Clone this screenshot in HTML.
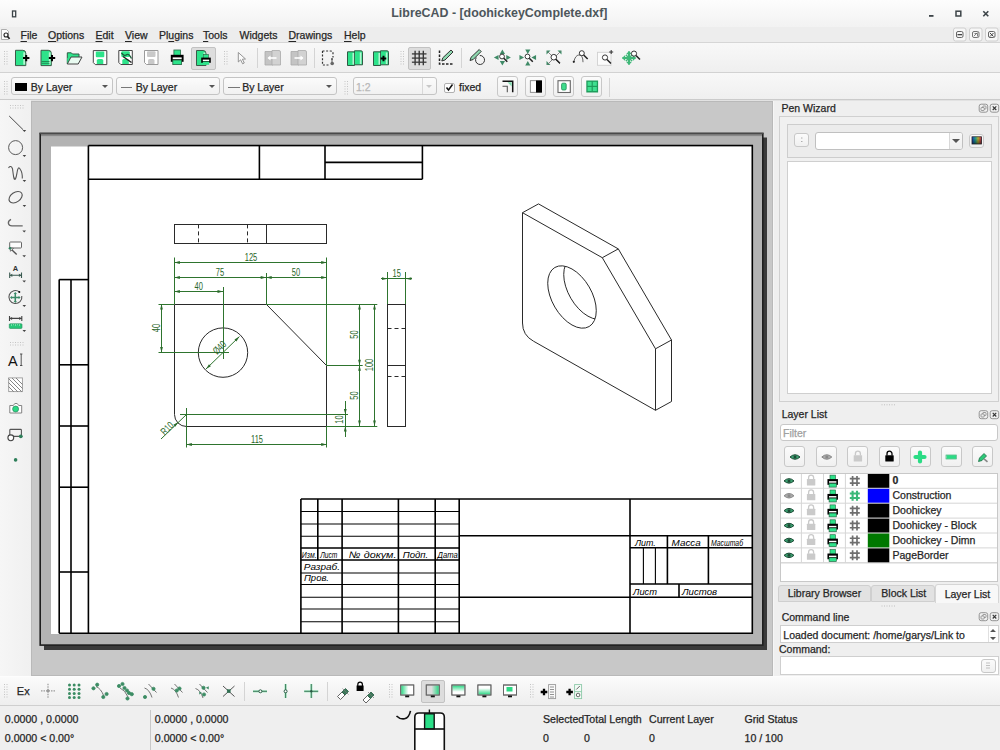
<!DOCTYPE html>
<html><head><meta charset="utf-8">
<style>
*{box-sizing:border-box;margin:0;padding:0}
html,body{width:1000px;height:750px;overflow:hidden;background:#efefef;font-family:"Liberation Sans",sans-serif;font-size:10.5px;color:#262626;-webkit-text-stroke-width:0.25px}
.a{position:absolute}
.t{position:absolute;white-space:pre;line-height:1}
.menu{top:30px}
.u{text-decoration:underline;text-underline-offset:1.5px;text-decoration-thickness:1px}
.st{font-size:10.6px}
#titlebar{left:0;top:0;width:1000px;height:27px;background:linear-gradient(#fdfdfd,#f2f2f2)}
#menubar{left:0;top:27px;width:1000px;height:16px;background:#ededed;border-bottom:1px solid #d6d6d6}
#tb1{left:0;top:43px;width:1000px;height:30px;background:linear-gradient(#f8f8f8,#efefef);border-bottom:1px solid #d2d2d2}
#tb2{left:0;top:73px;width:1000px;height:28px;background:linear-gradient(#f8f8f8,#efefef);border-bottom:1px solid #e2e2e2;box-shadow:inset 0 -1px 0 #cbcbcb}
#lefttb{left:0;top:100px;width:31px;height:577px;background:linear-gradient(90deg,#f6f6f6,#f0f0f0)}
#canvas{left:31px;top:101px;width:742px;height:575px;background:#c8c8c8;border:1px solid #b9b9b9}
#dock{left:773px;top:101px;width:227px;height:575px;background:#efefef;border-left:1px solid #f6f6f6}
#bottomtb{left:0;top:676px;width:1000px;height:30px;background:linear-gradient(#fbfbfb,#eeeeee);border-top:1px solid #fdfdfd;border-bottom:1px solid #cfcfcf}
#status{left:0;top:706px;width:1000px;height:44px;background:#efefef}
.combo{position:absolute;height:18px;border:1px solid #c4c4c4;border-radius:3px;background:linear-gradient(#fbfbfb,#f1f1f1)}
.arr{position:absolute;top:7px;width:0;height:0;border-left:3.3px solid transparent;border-right:3.3px solid transparent;border-top:3.6px solid #555}
.btn{position:absolute;border:1px solid #c8c8c8;border-radius:3px;background:linear-gradient(#fbfbfb,#f0f0f0)}
.chk{position:absolute;border:1px solid #c2c2c2;border-radius:2px;background:#dddddd}
.sep{position:absolute;width:1px;background:#d4d4d4}
</style></head><body>
<div id="titlebar" class="a"></div>
<div id="menubar" class="a"></div>
<div id="tb1" class="a"></div>
<div id="tb2" class="a"></div>
<div id="lefttb" class="a"></div>
<div id="canvas" class="a"></div>
<div id="dock" class="a"></div>
<div id="bottomtb" class="a"></div>
<div id="status" class="a"></div>

<svg class="a" style="left:0;top:0" width="1000" height="750" viewBox="0 0 1000 750"><style>
.k2{stroke:#000;stroke-width:1.6;fill:none}
.k1{stroke:#000;stroke-width:1.1;fill:none}
.d{stroke:#2a2a2a;stroke-width:1;fill:none}
.dd{stroke:#2a2a2a;stroke-width:1;fill:none;stroke-dasharray:4 3}
.g{stroke:#2e742e;stroke-width:1;fill:none}
.ga{fill:#2a6a2a}
.gt{fill:#2a662a;font-family:"Liberation Sans",sans-serif;text-anchor:middle}
.kt{fill:#000;font-family:"Liberation Sans",sans-serif;font-style:italic}
</style><rect x="44" y="137.5" width="723" height="512.5" fill="#3a3a3a"/>
<rect x="40.2" y="133.5" width="722.6" height="511.6" fill="#b3b3b3" stroke="#1e1e1e" stroke-width="1.6"/>
<rect x="41" y="134.3" width="721" height="1.8" fill="#8a8a8a"/>
<path d="M39.4 133.5 H763.6" stroke="#4a4a4a" stroke-width="1.6"/>
<rect x="51" y="146.5" width="702" height="487.5" fill="#fff"/>
<path class="k2" d="M88.4 145.5 H752.3 V633.3 H59.2"/>
<line x1="88.4" y1="145.5" x2="88.4" y2="633.3" class="k2"/>
<line x1="59.2" y1="279.6" x2="59.2" y2="633.3" class="k2"/>
<line x1="71.0" y1="279.6" x2="71.0" y2="633.3" class="k2"/>
<line x1="59.2" y1="279.6" x2="88.4" y2="279.6" class="k2"/>
<line x1="59.2" y1="364.8" x2="88.4" y2="364.8" class="k2"/>
<line x1="59.2" y1="426.0" x2="88.4" y2="426.0" class="k2"/>
<line x1="59.2" y1="487.2" x2="88.4" y2="487.2" class="k2"/>
<line x1="59.2" y1="572.0" x2="88.4" y2="572.0" class="k2"/>
<line x1="88.4" y1="179.2" x2="422.4" y2="179.2" class="k2"/>
<line x1="422.4" y1="145.5" x2="422.4" y2="179.2" class="k2"/>
<line x1="259.4" y1="145.5" x2="259.4" y2="179.2" class="k2"/>
<line x1="325.0" y1="145.5" x2="325.0" y2="179.2" class="k2"/>
<line x1="325.0" y1="162.4" x2="422.4" y2="162.4" class="k2"/>
<line x1="300.9" y1="499.0" x2="752.3" y2="499.0" class="k2"/>
<line x1="300.9" y1="499.0" x2="300.9" y2="633.3" class="k2"/>
<line x1="317.8" y1="499.0" x2="317.8" y2="560.0" class="k2"/>
<line x1="342.1" y1="499.0" x2="342.1" y2="633.3" class="k2"/>
<line x1="398.4" y1="499.0" x2="398.4" y2="633.3" class="k2"/>
<line x1="435.2" y1="499.0" x2="435.2" y2="633.3" class="k2"/>
<line x1="459.2" y1="499.0" x2="459.2" y2="633.3" class="k2"/>
<line x1="630.0" y1="499.0" x2="630.0" y2="633.3" class="k2"/>
<line x1="300.9" y1="511.5" x2="459.2" y2="511.5" class="k1"/>
<line x1="300.9" y1="524.0" x2="459.2" y2="524.0" class="k1"/>
<line x1="300.9" y1="536.2" x2="459.2" y2="536.2" class="k1"/>
<line x1="300.9" y1="573.0" x2="459.2" y2="573.0" class="k1"/>
<line x1="300.9" y1="584.5" x2="459.2" y2="584.5" class="k1"/>
<line x1="300.9" y1="597.3" x2="459.2" y2="597.3" class="k1"/>
<line x1="300.9" y1="609.0" x2="459.2" y2="609.0" class="k1"/>
<line x1="300.9" y1="621.7" x2="459.2" y2="621.7" class="k1"/>
<line x1="300.9" y1="548.0" x2="459.2" y2="548.0" class="k2"/>
<line x1="300.9" y1="560.0" x2="459.2" y2="560.0" class="k2"/>
<line x1="459.2" y1="535.8" x2="752.3" y2="535.8" class="k2"/>
<line x1="459.2" y1="597.2" x2="752.3" y2="597.2" class="k2"/>
<line x1="630.0" y1="547.7" x2="752.3" y2="547.7" class="k2"/>
<line x1="630.0" y1="584.0" x2="752.3" y2="584.0" class="k2"/>
<line x1="667.4" y1="535.8" x2="667.4" y2="584.0" class="k2"/>
<line x1="708.4" y1="535.8" x2="708.4" y2="584.0" class="k2"/>
<line x1="643.4" y1="547.7" x2="643.4" y2="584.0" class="k1"/>
<line x1="655.4" y1="547.7" x2="655.4" y2="584.0" class="k1"/>
<line x1="679.0" y1="584.0" x2="679.0" y2="597.2" class="k2"/>
<path class="d" d="M174.5 304.5 H266.5 L326.5 365.5 V426.5 H186.5 A12 12 0 0 1 174.5 414.5 Z"/>
<circle class="d" cx="223" cy="352.6" r="24.7"/>
<rect class="d" x="174.5" y="224.5" width="152" height="19"/>
<line x1="266.5" y1="224.4" x2="266.5" y2="243.3" class="d"/>
<line x1="198.5" y1="224.4" x2="198.5" y2="243.3" class="dd"/>
<line x1="247.5" y1="224.4" x2="247.5" y2="243.3" class="dd"/>
<rect class="d" x="387.5" y="304.5" width="18" height="122"/>
<line x1="387.5" y1="365.5" x2="405.9" y2="365.5" class="d"/>
<line x1="387.5" y1="328.5" x2="405.9" y2="328.5" class="dd"/>
<line x1="387.5" y1="376.5" x2="405.9" y2="376.5" class="dd"/>
<line x1="174.5" y1="257.5" x2="174.5" y2="304.0" class="g"/>
<line x1="326.5" y1="257.5" x2="326.5" y2="365.3" class="g"/>
<line x1="266.5" y1="273.0" x2="266.5" y2="304.0" class="g"/>
<line x1="223.5" y1="287.0" x2="223.5" y2="359.0" class="g"/>
<line x1="174.4" y1="262.5" x2="326.7" y2="262.5" class="g"/>
<path class="ga" d="M174.4 262.5 L179.9 261.1 L179.9 263.9Z"/>
<path class="ga" d="M326.7 262.5 L321.2 263.9 L321.2 261.1Z"/>
<text transform="translate(251.0 260.5) rotate(0) scale(0.72 1)" class="gt" font-size="10.4">125</text>
<line x1="174.4" y1="277.5" x2="266.2" y2="277.5" class="g"/>
<path class="ga" d="M174.4 277.5 L179.9 276.1 L179.9 278.9Z"/>
<path class="ga" d="M266.2 277.5 L260.7 278.9 L260.7 276.1Z"/>
<text transform="translate(220.0 275.5) rotate(0) scale(0.72 1)" class="gt" font-size="10.4">75</text>
<line x1="266.2" y1="277.5" x2="326.7" y2="277.5" class="g"/>
<path class="ga" d="M266.2 277.5 L271.7 276.1 L271.7 278.9Z"/>
<path class="ga" d="M326.7 277.5 L321.2 278.9 L321.2 276.1Z"/>
<text transform="translate(296.0 275.5) rotate(0) scale(0.72 1)" class="gt" font-size="10.4">50</text>
<line x1="174.4" y1="291.5" x2="223.0" y2="291.5" class="g"/>
<path class="ga" d="M174.4 291.5 L179.9 290.1 L179.9 292.9Z"/>
<path class="ga" d="M223.0 291.5 L217.5 292.9 L217.5 290.1Z"/>
<text transform="translate(198.7 289.5) rotate(0) scale(0.72 1)" class="gt" font-size="10.4">40</text>
<line x1="158.5" y1="304.5" x2="174.4" y2="304.5" class="g"/>
<line x1="158.5" y1="352.5" x2="229.0" y2="352.5" class="g"/>
<line x1="161.5" y1="304.0" x2="161.5" y2="352.6" class="g"/>
<path class="ga" d="M161.5 304.0 L162.9 309.5 L160.1 309.5Z"/>
<path class="ga" d="M161.5 352.6 L160.1 347.1 L162.9 347.1Z"/>
<text transform="translate(159.5 328.0) rotate(-90) scale(0.72 1)" class="gt" font-size="10.4">40</text>
<line x1="206.0" y1="369.0" x2="239.4" y2="336.6" class="g"/>
<path class="ga" d="M206.0 369.0 L209.0 364.2 L210.9 366.2Z"/>
<path class="ga" d="M239.4 336.6 L236.4 341.4 L234.5 339.4Z"/>
<text transform="translate(222.0 350.0) rotate(-45) scale(0.72 1)" class="gt" font-size="10.4">Ø40</text>
<line x1="266.0" y1="304.5" x2="377.3" y2="304.5" class="g"/>
<line x1="326.7" y1="365.5" x2="362.7" y2="365.5" class="g"/>
<line x1="326.7" y1="426.5" x2="377.3" y2="426.5" class="g"/>
<line x1="359.5" y1="304.0" x2="359.5" y2="365.3" class="g"/>
<path class="ga" d="M359.5 304.0 L360.9 309.5 L358.1 309.5Z"/>
<path class="ga" d="M359.5 365.3 L358.1 359.8 L360.9 359.8Z"/>
<text transform="translate(357.5 334.5) rotate(-90) scale(0.72 1)" class="gt" font-size="10.4">50</text>
<line x1="359.5" y1="365.3" x2="359.5" y2="426.0" class="g"/>
<path class="ga" d="M359.5 365.3 L360.9 370.8 L358.1 370.8Z"/>
<path class="ga" d="M359.5 426.0 L358.1 420.5 L360.9 420.5Z"/>
<text transform="translate(357.5 395.5) rotate(-90) scale(0.72 1)" class="gt" font-size="10.4">50</text>
<line x1="374.5" y1="304.0" x2="374.5" y2="426.0" class="g"/>
<path class="ga" d="M374.5 304.0 L375.9 309.5 L373.1 309.5Z"/>
<path class="ga" d="M374.5 426.0 L373.1 420.5 L375.9 420.5Z"/>
<text transform="translate(372.7 365.0) rotate(-90) scale(0.72 1)" class="gt" font-size="10.4">100</text>
<line x1="180.0" y1="414.5" x2="348.0" y2="414.5" class="g"/>
<line x1="345.5" y1="401.0" x2="345.5" y2="437.0" class="g"/>
<path class="ga" d="M345.3 414.6 L343.9 409.1 L346.7 409.1Z"/>
<path class="ga" d="M345.3 426.0 L346.7 431.5 L343.9 431.5Z"/>
<text transform="translate(343.3 419.5) rotate(-90) scale(0.72 1)" class="gt" font-size="10.4">10</text>
<line x1="186.5" y1="408.0" x2="186.5" y2="447.5" class="g"/>
<line x1="326.5" y1="426.0" x2="326.5" y2="447.5" class="g"/>
<line x1="186.4" y1="444.5" x2="326.7" y2="444.5" class="g"/>
<path class="ga" d="M186.4 444.5 L191.9 443.1 L191.9 445.9Z"/>
<path class="ga" d="M326.7 444.5 L321.2 445.9 L321.2 443.1Z"/>
<text transform="translate(257.0 442.5) rotate(0) scale(0.72 1)" class="gt" font-size="10.4">115</text>
<line x1="161.0" y1="439.0" x2="186.4" y2="414.6" class="g"/>
<path class="ga" d="M178.3 422.0 L175.3 426.8 L173.4 424.8Z"/>
<text transform="translate(169.5 431.0) rotate(-45) scale(0.72 1)" class="gt" font-size="10.4">R10</text>
<line x1="387.5" y1="272.0" x2="387.5" y2="304.0" class="g"/>
<line x1="405.5" y1="272.0" x2="405.5" y2="304.0" class="g"/>
<line x1="381.0" y1="278.5" x2="412.0" y2="278.5" class="g"/>
<path class="ga" d="M387.5 278.7 L382.0 280.1 L382.0 277.3Z"/>
<path class="ga" d="M405.9 278.7 L411.4 277.3 L411.4 280.1Z"/>
<text transform="translate(396.7 276.5) rotate(0) scale(0.72 1)" class="gt" font-size="10.4">15</text>
<path class="d" d="M522.5 212.7 L602.3 257.7 L655.5 348.8 L655.5 410.3 L533.5 341.2 Q522.5 335.2 522.5 323 Z"/>
<line x1="522.5" y1="212.7" x2="538.5" y2="203.9" class="d"/>
<line x1="602.3" y1="257.7" x2="618.3" y2="248.9" class="d"/>
<line x1="655.5" y1="348.8" x2="671.5" y2="340.0" class="d"/>
<line x1="655.5" y1="410.3" x2="671.5" y2="401.5" class="d"/>
<path class="d" d="M538.5 203.9 L618.3 248.9 L671.5 340.0 L671.5 401.5"/>
<clipPath id="hc"><ellipse cx="0" cy="0" rx="28" ry="28" transform="matrix(0.867 0.491 0 1 572 297)"/></clipPath>
<g transform="matrix(0.867 0.491 0 1 572 297)"><circle class="d" cx="0" cy="0" r="28" vector-effect="non-scaling-stroke"/></g>
<g clip-path="url(#hc)"><g transform="matrix(0.867 0.491 0 1 588.0 288.2)"><circle class="d" cx="0" cy="0" r="28" vector-effect="non-scaling-stroke"/></g></g>
<text x="301.8" y="558.4" class="kt" font-size="9.6" textLength="14.8" lengthAdjust="spacingAndGlyphs">Изм.</text>
<text x="320.2" y="558.4" class="kt" font-size="9.6" textLength="17.2" lengthAdjust="spacingAndGlyphs">Лист</text>
<text x="349" y="558.4" class="kt" font-size="9.6" textLength="47.5" lengthAdjust="spacingAndGlyphs">№  докум.</text>
<text x="402.8" y="558.4" class="kt" font-size="9.6" textLength="25.5" lengthAdjust="spacingAndGlyphs">Подп.</text>
<text x="437.6" y="558.4" class="kt" font-size="9.6" textLength="20.2" lengthAdjust="spacingAndGlyphs">Дата</text>
<text x="303.8" y="570.2" class="kt" font-size="9.6" textLength="36.2" lengthAdjust="spacingAndGlyphs">Разраб.</text>
<text x="304" y="581.4" class="kt" font-size="9.6" textLength="25" lengthAdjust="spacingAndGlyphs">Пров.</text>
<text x="635" y="546.4" class="kt" font-size="9.6" textLength="20.8" lengthAdjust="spacingAndGlyphs">Лит.</text>
<text x="671.6" y="546.4" class="kt" font-size="9.6" textLength="29.2" lengthAdjust="spacingAndGlyphs">Масса</text>
<text x="711" y="546.4" class="kt" font-size="9.6" textLength="32" lengthAdjust="spacingAndGlyphs">Масштаб</text>
<text x="633" y="595" class="kt" font-size="9.6" textLength="24" lengthAdjust="spacingAndGlyphs">Лист</text>
<text x="682" y="595" class="kt" font-size="9.6" textLength="35" lengthAdjust="spacingAndGlyphs">Листов</text>
</svg><!-- TITLE -->
<div class="t" style="left:391.3px;top:7.2px;font-size:12.4px;font-weight:bold;color:#4d565b;-webkit-text-stroke-width:0">LibreCAD - [doohickeyComplete.dxf]</div>

<!-- MENU -->
<div class="t menu" style="left:20.5px"><span class="u">F</span>ile</div>
<div class="t menu" style="left:48px"><span class="u">O</span>ptions</div>
<div class="t menu" style="left:95.5px"><span class="u">E</span>dit</div>
<div class="t menu" style="left:125px"><span class="u">V</span>iew</div>
<div class="t menu" style="left:159px">Pl<span class="u">u</span>gins</div>
<div class="t menu" style="left:203px"><span class="u">T</span>ools</div>
<div class="t menu" style="left:239.5px">Widgets</div>
<div class="t menu" style="left:288.5px"><span class="u">D</span>rawings</div>
<div class="t menu" style="left:344px"><span class="u">H</span>elp</div>
<div class="a" style="left:953px;top:27.5px;width:13.5px;height:14px" ></div>

<!-- TOOLBAR 1 checked buttons -->
<div class="chk" style="left:191px;top:46.5px;width:25px;height:23px"></div>
<div class="chk" style="left:407.7px;top:46.5px;width:23.6px;height:23px"></div>
<div class="sep" style="left:257px;top:48px;height:20px"></div>
<div class="sep" style="left:314px;top:48px;height:20px"></div>
<div class="sep" style="left:461px;top:48px;height:20px"></div>

<!-- TOOLBAR 2 -->
<div class="combo" style="left:10.8px;top:77.3px;width:102.5px"><div class="a" style="left:3.5px;top:4.5px;width:12px;height:8.5px;background:#000"></div><div class="t" style="left:19px;top:3.5px">By Layer</div><div class="arr" style="left:90.6px"></div></div>
<div class="combo" style="left:115.7px;top:77.3px;width:104.6px"><div class="a" style="left:4px;top:8.5px;width:11.5px;height:1px;background:#777"></div><div class="t" style="left:19px;top:3.5px">By Layer</div><div class="arr" style="left:92.6px"></div></div>
<div class="combo" style="left:222.7px;top:77.3px;width:114.4px"><div class="a" style="left:4px;top:8.5px;width:12px;height:1px;background:#777"></div><div class="t" style="left:18.5px;top:3.5px">By Layer</div><div class="arr" style="left:102.4px"></div></div>
<div class="combo dis" style="left:352.5px;top:77.3px;width:84.7px"><div class="t" style="left:2.5px;top:3.5px;color:#b8b8b8">1:2</div><div class="a" style="left:68px;top:0;width:1px;height:16px;background:#d8d8d8"></div><div class="arr" style="left:72.8px;border-top-color:#c8c8c8"></div></div>
<div class="a" style="left:444.4px;top:82.5px;width:10.5px;height:10px;border:1px solid #b0b0b0;border-radius:2px;background:#fdfdfd"></div>
<div class="t" style="left:459px;top:82px">fixed</div>
<div class="btn" style="left:497.4px;top:76.4px;width:20.6px;height:21px"></div>
<div class="btn" style="left:525.4px;top:76.4px;width:20.6px;height:21px"></div>
<div class="btn" style="left:553.4px;top:76.4px;width:20.6px;height:21px"></div>
<div class="btn" style="left:581.4px;top:76.4px;width:20.6px;height:21px"></div>
<div class="sep" style="left:609px;top:78px;height:19px"></div>

<!-- DOCK -->
<div class="t" style="left:781.5px;top:102.6px">Pen Wizard</div>
<div class="a" style="left:778.5px;top:116px;width:220.5px;height:285.5px;border:1px solid #d0d0d0;background:#f0f0f0"></div>
<div class="a" style="left:786.5px;top:123.5px;width:205.5px;height:34px;border:1px solid #cdcdcd;background:#ececec"></div>
<div class="btn" style="left:794px;top:133px;width:14.5px;height:14px"></div>
<div class="a" style="left:814.5px;top:131.5px;width:148.5px;height:18px;border:1px solid #c0c0c0;border-radius:3px;background:#fff"></div>
<div class="a" style="left:948.5px;top:132.5px;width:13.5px;height:16px;background:linear-gradient(#f8f8f8,#efefef);border-left:1px solid #d8d8d8;border-radius:0 2px 2px 0"></div>
<div class="arr" style="left:952px;top:139px;border-left-width:4px;border-right-width:4px;border-top-width:4px"></div>
<div class="btn" style="left:969px;top:133.5px;width:14.5px;height:14px"></div>
<div class="a" style="left:786.7px;top:160.5px;width:205.3px;height:233.5px;border:1px solid #cfcfcf;background:#fff"></div>

<div class="t" style="left:781.7px;top:409px">Layer List</div>
<div class="a" style="left:780.4px;top:423.7px;width:217.6px;height:17.6px;border:1px solid #c8c8c8;border-radius:3px;background:#fff"></div>
<div class="t" style="left:783px;top:427.5px;color:#a0a0a0">Filter</div>
<div class="btn" style="left:784.4px;top:446.4px;width:21px;height:21px"></div>
<div class="btn" style="left:816px;top:446.4px;width:21px;height:21px"></div>
<div class="btn" style="left:847.3px;top:446.4px;width:21px;height:21px"></div>
<div class="btn" style="left:878.5px;top:446.4px;width:21px;height:21px"></div>
<div class="btn" style="left:909.6px;top:446.4px;width:21px;height:21px"></div>
<div class="btn" style="left:940.7px;top:446.4px;width:21px;height:21px"></div>
<div class="btn" style="left:972.4px;top:446.4px;width:21px;height:21px"></div>
<div class="a" id="ltable" style="left:780.3px;top:473.3px;width:217.3px;height:108.3px;border:1px solid #c8c8c8;background:#fff"></div>


<!-- LAYER NAMES -->
<div class="t" style="left:892.5px;top:475.4px;font-weight:bold;">0</div>
<div class="t" style="left:892.5px;top:490.2px;">Construction</div>
<div class="t" style="left:892.5px;top:505.1px;">Doohickey</div>
<div class="t" style="left:892.5px;top:520.0px;">Doohickey - Block</div>
<div class="t" style="left:892.5px;top:535.0px;">Doohickey - Dimn</div>
<div class="t" style="left:892.5px;top:549.8px;">PageBorder</div>
<div class="a" style="left:778.3px;top:584.7px;width:92.7px;height:17.3px;border:1px solid #cfcfcf;border-radius:3px 3px 0 0;background:#e2e2e2"></div>
<div class="a" style="left:871px;top:584.7px;width:64.3px;height:17.3px;border:1px solid #cfcfcf;border-radius:3px 3px 0 0;background:#e2e2e2"></div>
<div class="a" style="left:935.3px;top:584px;width:63.4px;height:19px;border:1px solid #d6d6d6;border-bottom:none;border-radius:3px 3px 0 0;background:#f8f8f8"></div>
<div class="t" style="left:787.7px;top:588px">Library Browser</div>
<div class="t" style="left:881.3px;top:588px">Block List</div>
<div class="t" style="left:944.7px;top:589px">Layer List</div>

<div class="t" style="left:781.7px;top:611.5px">Command line</div>
<div class="a" style="left:779.7px;top:625.3px;width:219px;height:17.4px;border:1px solid #cfcfcf;background:#fff"></div>
<div class="a" style="left:987.7px;top:626.3px;width:1px;height:15.4px;background:#e0e0e0"></div>
<div class="t" style="left:783.3px;top:629.5px">Loaded document: /home/garys/Link to</div>
<div class="t" style="left:779px;top:644px">Command:</div>
<div class="a" style="left:779.7px;top:656.4px;width:219px;height:18.9px;border:1px solid #cfcfcf;background:#fff"></div>
<div class="btn" style="left:981.3px;top:658.7px;width:14.7px;height:14px"></div>

<!-- BOTTOM TOOLBAR -->
<div class="t" style="left:16.8px;top:686px;font-size:11px">Ex</div>
<div class="sep" style="left:244px;top:682px;height:19px"></div>
<div class="sep" style="left:327px;top:682px;height:19px"></div>
<div class="chk" style="left:420.5px;top:680px;width:24.3px;height:23.2px"></div>

<!-- STATUS -->
<div class="t st" style="left:4.8px;top:714px">0.0000 , 0.0000</div>
<div class="t st" style="left:4.8px;top:733px">0.0000 &lt; 0.00°</div>
<div class="a" style="left:149.5px;top:709.6px;width:1px;height:40.4px;background:#c8c8c8"></div>
<div class="t st" style="left:154.8px;top:714px">0.0000 , 0.0000</div>
<div class="t st" style="left:154.8px;top:733px">0.0000 &lt; 0.00°</div>
<div class="t st" style="left:543px;top:714px">Selected</div>
<div class="t st" style="left:584px;top:714px">Total Length</div>
<div class="t st" style="left:649px;top:714px">Current Layer</div>
<div class="t st" style="left:744.5px;top:714px">Grid Status</div>
<div class="t st" style="left:543px;top:733px">0</div>
<div class="t st" style="left:584px;top:733px">0</div>
<div class="t st" style="left:649px;top:733px">0</div>
<div class="t st" style="left:744.5px;top:733px">10 / 100</div>
<svg class="a" style="left:0;top:0" width="1000" height="750" viewBox="0 0 1000 750"><rect x="12.5" y="11" width="3.2" height="5.8" fill="none" stroke="#3c4448" stroke-width="1.3"/>
<rect x="929" y="15" width="4.5" height="1.8" fill="#3c4448"/>
<rect x="956" y="11.2" width="4.8" height="4.8" fill="none" stroke="#3c4448" stroke-width="1.5"/>
<path d="M983.3 11.3 L988.3 16.3 M988.3 11.3 L983.3 16.3" stroke="#3c4448" stroke-width="1.6"/>
<rect x="953.5" y="28" width="12.5" height="13" rx="2" fill="#f7f7f7" stroke="#cfcfcf"/>
<rect x="969.5" y="28" width="12.5" height="13" rx="2" fill="#f7f7f7" stroke="#cfcfcf"/>
<rect x="985.5" y="28" width="12.5" height="13" rx="2" fill="#f7f7f7" stroke="#cfcfcf"/>
<rect x="956.5" y="31.5" width="6.5" height="6" rx="1.5" fill="none" stroke="#555" stroke-width="0.9"/><rect x="957.5" y="34" width="4.5" height="1.3" fill="#444"/>
<rect x="972.5" y="31.5" width="6.5" height="6" rx="1.5" fill="none" stroke="#666" stroke-width="0.9"/><path d="M974 36 l3.5 -3.5 M974.5 33.5 h3 v3" stroke="#666" stroke-width="0.8" fill="none"/>
<rect x="988.5" y="31.5" width="6.5" height="6" rx="1.5" fill="none" stroke="#555" stroke-width="0.9"/><path d="M990 33 l3.5 3.5 M993.5 33 l-3.5 3.5" stroke="#444" stroke-width="1"/>
<path d="M1.5 29.5 h5 l2 2 v8 h-7z" fill="#fdfdfd" stroke="#9a9a9a" stroke-width="0.8"/><circle cx="6" cy="35" r="2" fill="none" stroke="#222" stroke-width="1.1"/><path d="M7.3 36.4 l2.4 2.4" stroke="#222" stroke-width="1.5"/>
<rect x="4" y="51" width="1" height="1" fill="#c4c4c4"/><rect x="6.5" y="51" width="1" height="1" fill="#c4c4c4"/>
<rect x="4" y="53.5" width="1" height="1" fill="#c4c4c4"/><rect x="6.5" y="53.5" width="1" height="1" fill="#c4c4c4"/>
<rect x="4" y="56.0" width="1" height="1" fill="#c4c4c4"/><rect x="6.5" y="56.0" width="1" height="1" fill="#c4c4c4"/>
<rect x="4" y="58.5" width="1" height="1" fill="#c4c4c4"/><rect x="6.5" y="58.5" width="1" height="1" fill="#c4c4c4"/>
<rect x="4" y="61.0" width="1" height="1" fill="#c4c4c4"/><rect x="6.5" y="61.0" width="1" height="1" fill="#c4c4c4"/>
<rect x="4" y="63.5" width="1" height="1" fill="#c4c4c4"/><rect x="6.5" y="63.5" width="1" height="1" fill="#c4c4c4"/>
<rect x="224" y="51" width="1" height="1" fill="#c4c4c4"/><rect x="226.5" y="51" width="1" height="1" fill="#c4c4c4"/>
<rect x="224" y="53.5" width="1" height="1" fill="#c4c4c4"/><rect x="226.5" y="53.5" width="1" height="1" fill="#c4c4c4"/>
<rect x="224" y="56.0" width="1" height="1" fill="#c4c4c4"/><rect x="226.5" y="56.0" width="1" height="1" fill="#c4c4c4"/>
<rect x="224" y="58.5" width="1" height="1" fill="#c4c4c4"/><rect x="226.5" y="58.5" width="1" height="1" fill="#c4c4c4"/>
<rect x="224" y="61.0" width="1" height="1" fill="#c4c4c4"/><rect x="226.5" y="61.0" width="1" height="1" fill="#c4c4c4"/>
<rect x="224" y="63.5" width="1" height="1" fill="#c4c4c4"/><rect x="226.5" y="63.5" width="1" height="1" fill="#c4c4c4"/>
<rect x="400.5" y="51" width="1" height="1" fill="#c4c4c4"/><rect x="403.0" y="51" width="1" height="1" fill="#c4c4c4"/>
<rect x="400.5" y="53.5" width="1" height="1" fill="#c4c4c4"/><rect x="403.0" y="53.5" width="1" height="1" fill="#c4c4c4"/>
<rect x="400.5" y="56.0" width="1" height="1" fill="#c4c4c4"/><rect x="403.0" y="56.0" width="1" height="1" fill="#c4c4c4"/>
<rect x="400.5" y="58.5" width="1" height="1" fill="#c4c4c4"/><rect x="403.0" y="58.5" width="1" height="1" fill="#c4c4c4"/>
<rect x="400.5" y="61.0" width="1" height="1" fill="#c4c4c4"/><rect x="403.0" y="61.0" width="1" height="1" fill="#c4c4c4"/>
<rect x="400.5" y="63.5" width="1" height="1" fill="#c4c4c4"/><rect x="403.0" y="63.5" width="1" height="1" fill="#c4c4c4"/>
<rect x="4" y="81" width="1" height="1" fill="#c4c4c4"/><rect x="6.5" y="81" width="1" height="1" fill="#c4c4c4"/>
<rect x="4" y="83.5" width="1" height="1" fill="#c4c4c4"/><rect x="6.5" y="83.5" width="1" height="1" fill="#c4c4c4"/>
<rect x="4" y="86.0" width="1" height="1" fill="#c4c4c4"/><rect x="6.5" y="86.0" width="1" height="1" fill="#c4c4c4"/>
<rect x="4" y="88.5" width="1" height="1" fill="#c4c4c4"/><rect x="6.5" y="88.5" width="1" height="1" fill="#c4c4c4"/>
<rect x="4" y="91.0" width="1" height="1" fill="#c4c4c4"/><rect x="6.5" y="91.0" width="1" height="1" fill="#c4c4c4"/>
<rect x="4" y="93.5" width="1" height="1" fill="#c4c4c4"/><rect x="6.5" y="93.5" width="1" height="1" fill="#c4c4c4"/>
<rect x="344.5" y="81" width="1" height="1" fill="#c4c4c4"/><rect x="347.0" y="81" width="1" height="1" fill="#c4c4c4"/>
<rect x="344.5" y="83.5" width="1" height="1" fill="#c4c4c4"/><rect x="347.0" y="83.5" width="1" height="1" fill="#c4c4c4"/>
<rect x="344.5" y="86.0" width="1" height="1" fill="#c4c4c4"/><rect x="347.0" y="86.0" width="1" height="1" fill="#c4c4c4"/>
<rect x="344.5" y="88.5" width="1" height="1" fill="#c4c4c4"/><rect x="347.0" y="88.5" width="1" height="1" fill="#c4c4c4"/>
<rect x="344.5" y="91.0" width="1" height="1" fill="#c4c4c4"/><rect x="347.0" y="91.0" width="1" height="1" fill="#c4c4c4"/>
<rect x="344.5" y="93.5" width="1" height="1" fill="#c4c4c4"/><rect x="347.0" y="93.5" width="1" height="1" fill="#c4c4c4"/>
<rect x="10" y="105" width="1" height="1" fill="#c4c4c4"/><rect x="10" y="107.5" width="1" height="1" fill="#c4c4c4"/>
<rect x="12.5" y="105" width="1" height="1" fill="#c4c4c4"/><rect x="12.5" y="107.5" width="1" height="1" fill="#c4c4c4"/>
<rect x="15.0" y="105" width="1" height="1" fill="#c4c4c4"/><rect x="15.0" y="107.5" width="1" height="1" fill="#c4c4c4"/>
<rect x="17.5" y="105" width="1" height="1" fill="#c4c4c4"/><rect x="17.5" y="107.5" width="1" height="1" fill="#c4c4c4"/>
<rect x="20.0" y="105" width="1" height="1" fill="#c4c4c4"/><rect x="20.0" y="107.5" width="1" height="1" fill="#c4c4c4"/>
<rect x="22.5" y="105" width="1" height="1" fill="#c4c4c4"/><rect x="22.5" y="107.5" width="1" height="1" fill="#c4c4c4"/>
<rect x="10" y="342" width="1" height="1" fill="#c4c4c4"/><rect x="10" y="344.5" width="1" height="1" fill="#c4c4c4"/>
<rect x="12.5" y="342" width="1" height="1" fill="#c4c4c4"/><rect x="12.5" y="344.5" width="1" height="1" fill="#c4c4c4"/>
<rect x="15.0" y="342" width="1" height="1" fill="#c4c4c4"/><rect x="15.0" y="344.5" width="1" height="1" fill="#c4c4c4"/>
<rect x="17.5" y="342" width="1" height="1" fill="#c4c4c4"/><rect x="17.5" y="344.5" width="1" height="1" fill="#c4c4c4"/>
<rect x="20.0" y="342" width="1" height="1" fill="#c4c4c4"/><rect x="20.0" y="344.5" width="1" height="1" fill="#c4c4c4"/>
<rect x="22.5" y="342" width="1" height="1" fill="#c4c4c4"/><rect x="22.5" y="344.5" width="1" height="1" fill="#c4c4c4"/>
<rect x="4" y="684" width="1" height="1" fill="#c4c4c4"/><rect x="6.5" y="684" width="1" height="1" fill="#c4c4c4"/>
<rect x="4" y="686.5" width="1" height="1" fill="#c4c4c4"/><rect x="6.5" y="686.5" width="1" height="1" fill="#c4c4c4"/>
<rect x="4" y="689.0" width="1" height="1" fill="#c4c4c4"/><rect x="6.5" y="689.0" width="1" height="1" fill="#c4c4c4"/>
<rect x="4" y="691.5" width="1" height="1" fill="#c4c4c4"/><rect x="6.5" y="691.5" width="1" height="1" fill="#c4c4c4"/>
<rect x="4" y="694.0" width="1" height="1" fill="#c4c4c4"/><rect x="6.5" y="694.0" width="1" height="1" fill="#c4c4c4"/>
<rect x="4" y="696.5" width="1" height="1" fill="#c4c4c4"/><rect x="6.5" y="696.5" width="1" height="1" fill="#c4c4c4"/>
<rect x="389" y="684" width="1" height="1" fill="#c4c4c4"/><rect x="391.5" y="684" width="1" height="1" fill="#c4c4c4"/>
<rect x="389" y="686.5" width="1" height="1" fill="#c4c4c4"/><rect x="391.5" y="686.5" width="1" height="1" fill="#c4c4c4"/>
<rect x="389" y="689.0" width="1" height="1" fill="#c4c4c4"/><rect x="391.5" y="689.0" width="1" height="1" fill="#c4c4c4"/>
<rect x="389" y="691.5" width="1" height="1" fill="#c4c4c4"/><rect x="391.5" y="691.5" width="1" height="1" fill="#c4c4c4"/>
<rect x="389" y="694.0" width="1" height="1" fill="#c4c4c4"/><rect x="391.5" y="694.0" width="1" height="1" fill="#c4c4c4"/>
<rect x="389" y="696.5" width="1" height="1" fill="#c4c4c4"/><rect x="391.5" y="696.5" width="1" height="1" fill="#c4c4c4"/>
<rect x="530" y="684" width="1" height="1" fill="#c4c4c4"/><rect x="532.5" y="684" width="1" height="1" fill="#c4c4c4"/>
<rect x="530" y="686.5" width="1" height="1" fill="#c4c4c4"/><rect x="532.5" y="686.5" width="1" height="1" fill="#c4c4c4"/>
<rect x="530" y="689.0" width="1" height="1" fill="#c4c4c4"/><rect x="532.5" y="689.0" width="1" height="1" fill="#c4c4c4"/>
<rect x="530" y="691.5" width="1" height="1" fill="#c4c4c4"/><rect x="532.5" y="691.5" width="1" height="1" fill="#c4c4c4"/>
<rect x="530" y="694.0" width="1" height="1" fill="#c4c4c4"/><rect x="532.5" y="694.0" width="1" height="1" fill="#c4c4c4"/>
<rect x="530" y="696.5" width="1" height="1" fill="#c4c4c4"/><rect x="532.5" y="696.5" width="1" height="1" fill="#c4c4c4"/>
<rect x="881.5" y="605.5" width="1" height="1" fill="#c0c0c0"/>
<rect x="884.0" y="605.5" width="1" height="1" fill="#c0c0c0"/>
<rect x="886.5" y="605.5" width="1" height="1" fill="#c0c0c0"/>
<rect x="889.0" y="605.5" width="1" height="1" fill="#c0c0c0"/>
<rect x="891.5" y="605.5" width="1" height="1" fill="#c0c0c0"/>
<rect x="894.0" y="605.5" width="1" height="1" fill="#c0c0c0"/>
<rect x="881.5" y="404.3" width="1" height="1" fill="#c0c0c0"/>
<rect x="884.0" y="404.3" width="1" height="1" fill="#c0c0c0"/>
<rect x="886.5" y="404.3" width="1" height="1" fill="#c0c0c0"/>
<rect x="889.0" y="404.3" width="1" height="1" fill="#c0c0c0"/>
<rect x="891.5" y="404.3" width="1" height="1" fill="#c0c0c0"/>
<rect x="894.0" y="404.3" width="1" height="1" fill="#c0c0c0"/>
<path d="M15.5 50.3 h7.300000000000001 q3 0 3 3 v12.3 h-10.3 z" fill="#2de38a" stroke="#3b5a48" stroke-width="1"/>
<rect x="23.3" y="52.3" width="1.8" height="12.3" fill="#b6f5d2"/>
<path d="M23.0 58.1 h6.4 M26.2 54.9 v6.4" stroke="#000" stroke-width="2"/>
<path d="M41 50.3 h7.300000000000001 q3 0 3 3 v12.3 h-10.3 z" fill="#2de38a" stroke="#3b5a48" stroke-width="1"/>
<rect x="48.8" y="52.3" width="1.8" height="12.3" fill="#b6f5d2"/>
<path d="M41.5 61.5 h8 M41.5 63.3 h8" stroke="#1f8f55" stroke-width="1"/>
<path d="M48.8 58.1 h6.4 M52 54.9 v6.4" stroke="#000" stroke-width="2"/>
<path d="M67.3 64 V52.8 h4 l1.2 1.2 h6.5 v3 " fill="#2de38a" stroke="#2f5a44" stroke-width="1"/>
<path d="M67.3 64 L67.3 58 q4 -1.5 11.5 -1.2 z" fill="#2de38a"/>
<path d="M67.3 64 L71 57 H82 L78.2 64 Z" fill="#e9fbf1" stroke="#444" stroke-width="1"/>
<path d="M93.3 50.6 h13.5 v14 h-11.5 l-2 -2 z" fill="#fff" stroke="#444" stroke-width="1"/>
<rect x="95.8" y="51.4" width="8.5" height="5.8" rx="1" fill="#2de38a"/>
<path d="M96.8 64.1 v-3.5 q0 -1.6 1.6 -1.6 h3.3 q1.6 0 1.6 1.6 v3.5z" fill="#2de38a"/>
<path d="M118.8 50.5 h13.5 v14 h-11.5 l-2 -2 z" fill="#fff" stroke="#444" stroke-width="1"/>
<rect x="121.3" y="51.3" width="8.5" height="5.8" rx="1" fill="#2de38a"/>
<path d="M122.3 64.0 v-3.5 q0 -1.6 1.6 -1.6 h3.3 q1.6 0 1.6 1.6 v3.5z" fill="#2de38a"/>
<path d="M121.5 53 q3 4 5.5 1.5 q2 -1 4.5 4" stroke="#1b5e3a" stroke-width="1.3" fill="none"/><path d="M123 56.5 l8.5 6" stroke="#222" stroke-width="1.5"/>
<path d="M144.5 50.5 h13.5 v14 h-11.5 l-2 -2 z" fill="#fff" stroke="#9a9a9a" stroke-width="1"/>
<rect x="147.0" y="51.3" width="8.5" height="5.8" rx="1" fill="#c9c9c9"/>
<path d="M148.0 64.0 v-3.5 q0 -1.6 1.6 -1.6 h3.3 q1.6 0 1.6 1.6 v3.5z" fill="#c9c9c9"/>
<g transform="translate(177.2 58) scale(1.0)"><rect x="-3.3" y="-8" width="6.6" height="6" fill="#2de38a" stroke="#2a6a48" stroke-width="0.8"/><path d="M-6.4 -3.2 h12.8 v7 h-12.8z" fill="#000"/><rect x="-4.5" y="-0.6" width="9" height="1.8" fill="#fff"/><rect x="-4.4" y="2" width="8.8" height="4.6" fill="#2de38a" stroke="#245e40" stroke-width="0.8"/></g>
<path d="M196.5 50.5 h6.5 q3 0 3 3 v12 h-9.5 z" fill="#2de38a" stroke="#3b5a48" stroke-width="1"/>
<rect x="203.5" y="52.5" width="1.8" height="12" fill="#b6f5d2"/>
<g transform="translate(206 60) scale(0.8)"><rect x="-3" y="-7" width="6" height="5" fill="#2de38a" stroke="#2a6a48" stroke-width="0.8"/><path d="M-6 -3 h12 v6.5 h-12z" fill="#000"/><rect x="-4" y="-0.5" width="8" height="1.8" fill="#fff"/><rect x="-4" y="2" width="8" height="4" fill="#2de38a"/></g>
<path d="M238.3 52.5 L238.3 62 L240.6 59.8 L242.6 63.8 L244.3 63 L242.4 59.2 L245.5 59 Z" fill="#fafafa" stroke="#8a8a8a" stroke-width="0.9"/>
<path d="M265 51.5 h8 v13.5 h-8z" fill="#c4c4c4" stroke="#a9a9a9" stroke-width="0.8"/>
<path d="M272 50.5 h7 q1.5 0 1.5 1.5 v13 h-8.5z" fill="#d2d2d2" stroke="#a9a9a9" stroke-width="0.8"/>
<path d="M268.5 58 h8" stroke="#fff" stroke-width="1.6"/>
<path d="M267.5 58 l3 -2.5 v5z" fill="#fff"/>
<path d="M291 51.5 h8 v13.5 h-8z" fill="#c4c4c4" stroke="#a9a9a9" stroke-width="0.8"/>
<path d="M298 50.5 h7 q1.5 0 1.5 1.5 v13 h-8.5z" fill="#d2d2d2" stroke="#a9a9a9" stroke-width="0.8"/>
<path d="M294.5 58 h8" stroke="#fff" stroke-width="1.6"/>
<path d="M303.5 58 l-3 -2.5 v5z" fill="#fff"/>
<path d="M322.5 51 h8 q2.5 0 2.5 2.5 v4 M322.5 51 v14 h6" fill="none" stroke="#333" stroke-width="1.2" stroke-dasharray="2 1.6"/>
<circle cx="332" cy="59" r="1" fill="#555"/><path d="M332 59 v3" stroke="#555" stroke-width="1"/><circle cx="332.2" cy="63.5" r="1.8" fill="#666"/>
<path d="M347.5 51.8 h7 v13.7 h-7z" fill="#2de38a" stroke="#2f5a44" stroke-width="1"/>
<path d="M354.5 50.8 h6.5 q1.5 0 1.5 1.5 v12.5 h-8z" fill="#2de38a" stroke="#2f5a44" stroke-width="1"/>
<rect x="352.5" y="53" width="1.6" height="11.5" fill="#b6f5d2"/><rect x="359.8" y="52.5" width="1.6" height="11.5" fill="#b6f5d2"/>
<path d="M373.5 51.8 h7 v13.7 h-7z" fill="#2de38a" stroke="#2f5a44" stroke-width="1"/>
<path d="M380.5 50.8 h6.5 q1.5 0 1.5 1.5 v12.5 h-8z" fill="#2de38a" stroke="#2f5a44" stroke-width="1"/>
<rect x="378.5" y="53" width="1.6" height="11.5" fill="#b6f5d2"/><rect x="385.8" y="52.5" width="1.6" height="11.5" fill="#b6f5d2"/>
<path d="M380.7 58.5 h5.6 M383.5 55.7 v5.6" stroke="#000" stroke-width="2"/>
<path d="M415.1 50.8 v14.4" stroke="#2e2e2e" stroke-width="1.3"/>
<path d="M419.2 50.8 v14.4" stroke="#2e2e2e" stroke-width="1.3"/>
<path d="M423.3 50.8 v14.4" stroke="#2e2e2e" stroke-width="1.3"/>
<path d="M411.9 53.9 h14.6" stroke="#3a3a3a" stroke-width="1.3"/>
<path d="M411.9 58.1 h14.6" stroke="#3a3a3a" stroke-width="1.3"/>
<path d="M411.9 62.2 h14.6" stroke="#3a3a3a" stroke-width="1.3"/>
<path d="M439.5 50.5 v13.5 h13.5" fill="none" stroke="#222" stroke-width="1.5" stroke-dasharray="2.5 1.5"/>
<path d="M441.8 61 l1 -3.2 l8.2 -7.8 l2 2 l-8 8 z" fill="#8fd8b0" stroke="#222" stroke-width="0.9"/>
<path d="M470 60.5 l1 -3.2 l8.2 -7.8 l2 2 l-8 8 z" fill="#8fd8b0" stroke="#222" stroke-width="0.9"/>
<path d="M479.8 55.5 a4.5 4.5 0 1 1 -3.5 2" fill="none" stroke="#333" stroke-width="1"/>
<path d="M502.4 49.4 L505.0 54.08 L499.79999999999995 54.08Z" fill="#3e8a66"/>
<path d="M502.4 65.6 L505.0 60.92 L499.79999999999995 60.92Z" fill="#3e8a66"/>
<path d="M493.9 57.5 L498.58 54.9 L498.58 60.1Z" fill="#3e8a66"/>
<path d="M510.90000000000003 57.5 L506.22 54.9 L506.22 60.1Z" fill="#3e8a66"/>
<circle cx="502" cy="56.5" r="2.4" fill="#fff" stroke="#222" stroke-width="0.9"/><path d="M503.8 58.3 l3.5 3.5" stroke="#222" stroke-width="1.5"/>
<path d="M527.8 54.1 L530.4 49.42 L525.1999999999999 49.42Z" fill="#3e8a66"/>
<path d="M527.8 60.9 L530.4 65.58 L525.1999999999999 65.58Z" fill="#3e8a66"/>
<path d="M524.1 57.5 L519.42 54.9 L519.42 60.1Z" fill="#3e8a66"/>
<path d="M531.4 57.5 L536.08 54.9 L536.08 60.1Z" fill="#3e8a66"/>
<circle cx="527.5" cy="56.5" r="2.4" fill="#fff" stroke="#222" stroke-width="0.9"/><path d="M529.3 58.3 l3.5 3.5" stroke="#222" stroke-width="1.5"/>
<path d="M546.5 50.5 h4 l-4 4z M561.5 50.5 h-4 l4 4z M546.5 65 v-4 l4 4z" fill="#3e8a66"/>
<path d="M547.5 51.5 l12.5 12.5 M560.5 51.5 l-13 13" stroke="#777" stroke-width="0.9"/>
<circle cx="553.8" cy="57.2" r="2.8" fill="#fff" stroke="#222" stroke-width="0.9"/><path d="M555.9 59.300000000000004 l4 4" stroke="#222" stroke-width="1.5"/>
<path d="M573.8 61.8 q1.5 -6.5 5 -6.8 q4.2 -0.2 4.2 7.2" fill="none" stroke="#555" stroke-width="0.9"/><circle cx="573.8" cy="61.8" r="1.1" fill="#222"/>
<circle cx="581.8" cy="53.2" r="2.5" fill="#fff" stroke="#222" stroke-width="0.9"/><path d="M583.675 55.075 l4 4" stroke="#222" stroke-width="1.5"/>
<rect x="597.5" y="52.3" width="13.5" height="13" fill="#fbfbfb" stroke="#d0d0d0" stroke-width="0.9"/>
<path d="M611.2 50 v4 M609.2 52 h4" stroke="#333" stroke-width="1"/>
<circle cx="605" cy="57.5" r="2.6" fill="#fff" stroke="#222" stroke-width="0.9"/><path d="M606.95 59.45 l4 4" stroke="#222" stroke-width="1.5"/>
<path d="M629 51.5 v13 M622.5 58 h13" stroke="#3fb878" stroke-width="2"/><path d="M629 51 l-3 3.2 h6z M629 65 l-3 -3.2 h6z M622 58 l3.2 -3 v6z M636 58 l-3.2 -3 v6z" fill="#3fb878"/><path d="M626 55 l6 6 M632 55 l-6 6" stroke="#3fb878" stroke-width="1.4"/>
<circle cx="634" cy="53.6" r="2.6" fill="#fff" stroke="#222" stroke-width="0.9"/><path d="M635.95 55.550000000000004 l4 4" stroke="#222" stroke-width="1.5"/>
<path d="M446.5 87.5 l2 2.5 l4 -5.5" fill="none" stroke="#111" stroke-width="1.5"/>
<path d="M502.5 81.3 h10.2 v11" fill="none" stroke="#111" stroke-width="1.5"/><path d="M502.5 86.3 h4.8 v6" fill="none" stroke="#555" stroke-width="1.1"/><path d="M507.5 82.2 h4.2 v4.2z" fill="#7fd9ad"/>
<rect x="530.3" y="80.7" width="11.2" height="11.6" fill="#fff" stroke="#777" stroke-width="0.8"/><rect x="536" y="80.5" width="6" height="12" fill="#000"/>
<rect x="558" y="80.7" width="12.3" height="11.8" fill="#fff" stroke="#666" stroke-width="1.1"/><rect x="561.6" y="83.2" width="4.6" height="6.8" rx="1.2" fill="#3fdc8c" stroke="#1f8a55" stroke-width="0.8"/>
<rect x="586.3" y="80.5" width="11.8" height="12" fill="#1f9c5c"/><rect x="587.6" y="81.8" width="4" height="4" fill="#3fe090"/><rect x="592.8" y="81.8" width="4" height="4" fill="#3fe090"/><rect x="587.6" y="87" width="4" height="4" fill="#3fe090"/><rect x="592.8" y="87" width="4" height="4" fill="#3fe090"/>
<path d="M9.2 116 L23.2 129.8" stroke="#4a4a4a" stroke-width="1"/>
<path d="M22.599999999999998 130 h3.6 l-1.8 2z" fill="#444"/>
<circle cx="15.6" cy="147.6" r="7" fill="none" stroke="#5a5a5a" stroke-width="1"/>
<path d="M22.599999999999998 155 h3.6 l-1.8 2z" fill="#444"/>
<path d="M8.5 167.8 q2.5 -3 4 1 q1.5 12 2 10 q1 2.5 2.5 -6 q1 -8 3.5 -3 q2 3 1.8 8.8" fill="none" stroke="#555" stroke-width="1.1"/>
<path d="M22.599999999999998 180 h3.6 l-1.8 2z" fill="#444"/>
<ellipse cx="15.6" cy="197.2" rx="7.3" ry="4.8" transform="rotate(-35 15.6 197.2)" fill="none" stroke="#555" stroke-width="1.1"/>
<path d="M22.599999999999998 205 h3.6 l-1.8 2z" fill="#444"/>
<path d="M11 219.3 q-3 1.5 -2.6 4 q0.5 2.4 3.5 2.5 h10.8" fill="none" stroke="#666" stroke-width="1.3"/>
<path d="M22.4 230.5 h3.6 l-1.8 2z" fill="#444"/>
<rect x="9.7" y="242" width="11.8" height="6" rx="0.8" fill="#fcfcfc" stroke="#666" stroke-width="1"/><path d="M10.2 248.3 l6.5 6.3" stroke="#555" stroke-width="1.4"/><path d="M10 248 l3.5 0.3 l-3 3z" fill="#fff" stroke="#555" stroke-width="0.8"/><circle cx="10" cy="248.3" r="1.3" fill="#2f7f5f"/>
<path d="M22.4 255.3 h3.6 l-1.8 2z" fill="#444"/>
<text x="15.5" y="271" font-size="7.5" font-weight="bold" text-anchor="middle" fill="#333" font-family="Liberation Sans">A</text><path d="M9.7 272.5 v5.5 M21.5 272.5 v5.5 M9.7 275.3 h11.8" stroke="#3a5a50" stroke-width="1.1"/><path d="M9.8 275.3 l2.5 -1.6 v3.2z M21.4 275.3 l-2.5 -1.6 v3.2z" fill="#3a5a50"/>
<path d="M22.4 280.5 h3.6 l-1.8 2z" fill="#444"/>
<path d="M19.5 292 a6.5 6.5 0 1 0 2.3 4" fill="none" stroke="#555" stroke-width="1.1"/><circle cx="19.3" cy="292" r="1" fill="#111"/>
<path d="M15.3 293 v9 M10.8 297.5 h9" stroke="#3b8a68" stroke-width="1.5"/><path d="M15.3 292 l-1.6 2 h3.2z M15.3 303 l-1.6 -2 h3.2z M10 297.5 l2 -1.6 v3.2z M20.6 297.5 l-2 -1.6 v3.2z" fill="#3b8a68"/>
<path d="M22.5 305 h3.6 l-1.8 2z" fill="#444"/>
<path d="M9.5 316 v5 M21.8 316 v5 M9.5 318.4 h12.3" stroke="#444" stroke-width="1.1"/><path d="M9.6 318.4 l2.5 -1.5 v3z M21.7 318.4 l-2.5 -1.5 v3z" fill="#444"/><rect x="9.3" y="323.8" width="12.7" height="4.6" rx="0.8" fill="#28c878" stroke="#1f8a55" stroke-width="0.6"/><path d="M11.5 324 v2 M13.5 324 v1.3 M15.5 324 v2 M17.5 324 v1.3 M19.5 324 v2" stroke="#bff5d8" stroke-width="0.5"/>
<path d="M22.5 330 h3.6 l-1.8 2z" fill="#444"/>
<text x="8" y="366" font-size="14.5" fill="#111" font-family="Liberation Sans">A</text><path d="M20 354 h2.4 M21.2 354 v11.5 M20 365.5 h2.4" stroke="#444" stroke-width="0.9"/>
<defs><clipPath id="hcl"><rect x="8.5" y="377.7" width="14" height="14"/></clipPath></defs><rect x="8.7" y="377.9" width="13.7" height="13.7" fill="#fff" stroke="#9a9a9a" stroke-width="0.9"/><g clip-path="url(#hcl)" stroke="#777" stroke-width="0.9"><path d="M4 378 l14 14 M8 378 l14 14 M12 378 l14 14 M16 378 l14 14 M0 378 l14 14"/></g>
<path d="M9.8 405.5 h3.5 l1.5 -2 h2.4 l1.5 2 h3 v7.5 h-11.9z" fill="#fff" stroke="#777" stroke-width="0.9"/><circle cx="15.6" cy="409" r="3" fill="#2bd884" stroke="#1f7a50" stroke-width="0.6"/>
<rect x="9.8" y="429.4" width="11.6" height="7" rx="0.8" fill="none" stroke="#555" stroke-width="1.1"/><circle cx="10.8" cy="437.8" r="2.9" fill="#fff" stroke="#444" stroke-width="1.1"/><circle cx="20.8" cy="436.3" r="1.9" fill="#2e7f5a"/>
<circle cx="15.6" cy="459.9" r="1.8" fill="#2e7f5a"/>
<rect x="979.2" y="104.2" width="8.5" height="8" rx="2" fill="#f0f0f0" stroke="#8a8a8a" stroke-width="0.9"/><rect x="982.8000000000001" y="106.0" width="3.2" height="3" rx="0.6" fill="none" stroke="#777" stroke-width="0.7"/><rect x="981.0" y="107.5" width="3.2" height="3" rx="0.6" fill="#f0f0f0" stroke="#777" stroke-width="0.7"/>
<rect x="990.2" y="104.2" width="8.5" height="8" rx="2" fill="#f0f0f0" stroke="#8a8a8a" stroke-width="0.9"/><path d="M992.7 106.4 l3.6 3.6 M996.3000000000001 106.4 l-3.6 3.6" stroke="#333" stroke-width="1.1"/>
<rect x="979.2" y="410.7" width="8.5" height="8" rx="2" fill="#f0f0f0" stroke="#8a8a8a" stroke-width="0.9"/><rect x="982.8000000000001" y="412.5" width="3.2" height="3" rx="0.6" fill="none" stroke="#777" stroke-width="0.7"/><rect x="981.0" y="414.0" width="3.2" height="3" rx="0.6" fill="#f0f0f0" stroke="#777" stroke-width="0.7"/>
<rect x="990.2" y="410.7" width="8.5" height="8" rx="2" fill="#f0f0f0" stroke="#8a8a8a" stroke-width="0.9"/><path d="M992.7 412.9 l3.6 3.6 M996.3000000000001 412.9 l-3.6 3.6" stroke="#333" stroke-width="1.1"/>
<rect x="979.2" y="612.7" width="8.5" height="8" rx="2" fill="#f0f0f0" stroke="#8a8a8a" stroke-width="0.9"/><rect x="982.8000000000001" y="614.5" width="3.2" height="3" rx="0.6" fill="none" stroke="#777" stroke-width="0.7"/><rect x="981.0" y="616.0" width="3.2" height="3" rx="0.6" fill="#f0f0f0" stroke="#777" stroke-width="0.7"/>
<rect x="990.2" y="612.7" width="8.5" height="8" rx="2" fill="#f0f0f0" stroke="#8a8a8a" stroke-width="0.9"/><path d="M992.7 614.9000000000001 l3.6 3.6 M996.3000000000001 614.9000000000001 l-3.6 3.6" stroke="#333" stroke-width="1.1"/>
<path d="M801.2 138 h1.2 M801.2 141.5 h1.2" stroke="#888" stroke-width="0.8"/>
<defs><linearGradient id="rgb" x1="0" x2="1"><stop offset="0" stop-color="#2040d0"/><stop offset="0.35" stop-color="#20b0a0"/><stop offset="0.65" stop-color="#d0c030"/><stop offset="1" stop-color="#d02060"/></linearGradient><linearGradient id="dk" x1="0" x2="0" y1="0" y2="1"><stop offset="0" stop-color="#000" stop-opacity="0"/><stop offset="1" stop-color="#000" stop-opacity="0.55"/></linearGradient></defs><rect x="972" y="136.8" width="9.5" height="7.2" fill="url(#rgb)"/><rect x="972" y="136.8" width="9.5" height="7.2" fill="url(#dk)" stroke="#222" stroke-width="0.8"/>
<path d="M790 457 q5 -4.5 10 0 q-5 4.5 -10 0z" fill="#3aa070" stroke="#1d4a35" stroke-width="1"/><circle cx="795" cy="457" r="1.5" fill="#1d4a35"/>
<path d="M821.8 457 q5 -4.5 10 0 q-5 4.5 -10 0z" fill="#aaa" stroke="#888" stroke-width="1"/><circle cx="826.8" cy="457" r="1.5" fill="#888"/>
<path d="M855.4 455.5 v-1.8 a2.5 2.5 0 0 1 5 0 v1.8" fill="none" stroke="#cacaca" stroke-width="1.3"/><rect x="853.6999999999999" y="455.2" width="8.4" height="6.3" rx="0.5" fill="#cacaca"/>
<path d="M887.0 455.5 v-1.8 a2.5 2.5 0 0 1 5 0 v1.8" fill="none" stroke="#000" stroke-width="1.3"/><rect x="885.3" y="455.2" width="8.4" height="6.3" rx="0.5" fill="#000"/>
<path d="M920 452.5 v9 M915.5 457 h9" stroke="#2bdc85" stroke-width="4.2" stroke-linecap="round"/>
<path d="M946.5 457 h9.5" stroke="#2bdc85" stroke-width="3.6" stroke-linecap="butt"/><rect x="946" y="455" width="10.5" height="4" fill="none" stroke="#22a866" stroke-width="0.6"/>
<path d="M978.5 461.5 l1 -3.5 l4.5 -4.5 l2.5 2.5 l-4.5 4.5 z" fill="#2bc878" stroke="#1b6e45" stroke-width="0.8"/><path d="M984 458.8 l3.5 3" stroke="#888" stroke-width="1.6"/>
<path d="M781 488.3 H997" stroke="#d6d6d6" stroke-width="1"/>
<path d="M781 503.2 H997" stroke="#d6d6d6" stroke-width="1"/>
<path d="M781 518.1 H997" stroke="#d6d6d6" stroke-width="1"/>
<path d="M781 533 H997" stroke="#d6d6d6" stroke-width="1"/>
<path d="M781 547.9 H997" stroke="#d6d6d6" stroke-width="1"/>
<path d="M781 562.8 H997" stroke="#d6d6d6" stroke-width="1"/>
<path d="M801.4 474 V562.8" stroke="#d6d6d6" stroke-width="1"/>
<path d="M823.5 474 V562.8" stroke="#d6d6d6" stroke-width="1"/>
<path d="M845.4 474 V562.8" stroke="#d6d6d6" stroke-width="1"/>
<path d="M781 562.8 H997" stroke="#d6d6d6"/>
<path d="M784 480.9 q5 -4.5 10 0 q-5 4.5 -10 0z" fill="#3aa070" stroke="#1d4a35" stroke-width="1"/><circle cx="789" cy="480.9" r="1.5" fill="#1d4a35"/>
<path d="M808.6 479.4 v-1.8 a2.5 2.5 0 0 1 5 0 v1.8" fill="none" stroke="#cacaca" stroke-width="1.3"/><rect x="806.9" y="479.09999999999997" width="8.4" height="6.3" rx="0.5" fill="#cacaca"/>
<g transform="translate(832.7 481.7) scale(0.82)"><rect x="-3.3" y="-8" width="6.6" height="6" fill="#2de38a" stroke="#2a6a48" stroke-width="0.8"/><path d="M-6.4 -3.2 h12.8 v7 h-12.8z" fill="#000"/><rect x="-4.5" y="-0.6" width="9" height="1.8" fill="#fff"/><rect x="-4.4" y="2" width="8.8" height="4.6" fill="#2de38a" stroke="#245e40" stroke-width="0.8"/></g>
<path d="M852.5999999999999 475.9 v10 M857.0 475.9 v10 M849.8 478.7 h10 M849.8 483.09999999999997 h10" stroke="#6e6e6e" stroke-width="1.7"/>
<rect x="867.8" y="474.0" width="21.5" height="13.800000000000011" fill="#000"/>
<path d="M784 495.75 q5 -4.5 10 0 q-5 4.5 -10 0z" fill="#aaa" stroke="#8a8a8a" stroke-width="1"/><circle cx="789" cy="495.75" r="1.5" fill="#8a8a8a"/>
<path d="M808.6 494.25 v-1.8 a2.5 2.5 0 0 1 5 0 v1.8" fill="none" stroke="#cacaca" stroke-width="1.3"/><rect x="806.9" y="493.95" width="8.4" height="6.3" rx="0.5" fill="#cacaca"/>
<g transform="translate(832.7 496.55) scale(0.82)"><rect x="-3.3" y="-8" width="6.6" height="6" fill="#2de38a" stroke="#2a6a48" stroke-width="0.8"/><path d="M-6.4 -3.2 h12.8 v7 h-12.8z" fill="#000"/><rect x="-4.5" y="-0.6" width="9" height="1.8" fill="#fff"/><rect x="-4.4" y="2" width="8.8" height="4.6" fill="#2de38a" stroke="#245e40" stroke-width="0.8"/></g>
<path d="M852.5999999999999 490.75 v10 M857.0 490.75 v10 M849.8 493.55 h10 M849.8 497.95 h10" stroke="#3ab878" stroke-width="2.1"/>
<rect x="867.8" y="488.8" width="21.5" height="13.899999999999977" fill="#0000ff"/>
<path d="M784 510.65 q5 -4.5 10 0 q-5 4.5 -10 0z" fill="#3aa070" stroke="#1d4a35" stroke-width="1"/><circle cx="789" cy="510.65" r="1.5" fill="#1d4a35"/>
<path d="M808.6 509.15 v-1.8 a2.5 2.5 0 0 1 5 0 v1.8" fill="none" stroke="#cacaca" stroke-width="1.3"/><rect x="806.9" y="508.84999999999997" width="8.4" height="6.3" rx="0.5" fill="#cacaca"/>
<g transform="translate(832.7 511.45) scale(0.82)"><rect x="-3.3" y="-8" width="6.6" height="6" fill="#2de38a" stroke="#2a6a48" stroke-width="0.8"/><path d="M-6.4 -3.2 h12.8 v7 h-12.8z" fill="#000"/><rect x="-4.5" y="-0.6" width="9" height="1.8" fill="#fff"/><rect x="-4.4" y="2" width="8.8" height="4.6" fill="#2de38a" stroke="#245e40" stroke-width="0.8"/></g>
<path d="M852.5999999999999 505.65 v10 M857.0 505.65 v10 M849.8 508.45 h10 M849.8 512.85 h10" stroke="#6e6e6e" stroke-width="1.7"/>
<rect x="867.8" y="503.7" width="21.5" height="13.900000000000034" fill="#000"/>
<path d="M784 525.55 q5 -4.5 10 0 q-5 4.5 -10 0z" fill="#3aa070" stroke="#1d4a35" stroke-width="1"/><circle cx="789" cy="525.55" r="1.5" fill="#1d4a35"/>
<path d="M808.6 524.05 v-1.8 a2.5 2.5 0 0 1 5 0 v1.8" fill="none" stroke="#cacaca" stroke-width="1.3"/><rect x="806.9" y="523.75" width="8.4" height="6.3" rx="0.5" fill="#cacaca"/>
<g transform="translate(832.7 526.3499999999999) scale(0.82)"><rect x="-3.3" y="-8" width="6.6" height="6" fill="#2de38a" stroke="#2a6a48" stroke-width="0.8"/><path d="M-6.4 -3.2 h12.8 v7 h-12.8z" fill="#000"/><rect x="-4.5" y="-0.6" width="9" height="1.8" fill="#fff"/><rect x="-4.4" y="2" width="8.8" height="4.6" fill="#2de38a" stroke="#245e40" stroke-width="0.8"/></g>
<path d="M852.5999999999999 520.55 v10 M857.0 520.55 v10 M849.8 523.3499999999999 h10 M849.8 527.75 h10" stroke="#6e6e6e" stroke-width="1.7"/>
<rect x="867.8" y="518.6" width="21.5" height="13.899999999999977" fill="#000"/>
<path d="M784 540.45 q5 -4.5 10 0 q-5 4.5 -10 0z" fill="#3aa070" stroke="#1d4a35" stroke-width="1"/><circle cx="789" cy="540.45" r="1.5" fill="#1d4a35"/>
<path d="M808.6 538.95 v-1.8 a2.5 2.5 0 0 1 5 0 v1.8" fill="none" stroke="#cacaca" stroke-width="1.3"/><rect x="806.9" y="538.6500000000001" width="8.4" height="6.3" rx="0.5" fill="#cacaca"/>
<g transform="translate(832.7 541.25) scale(0.82)"><rect x="-3.3" y="-8" width="6.6" height="6" fill="#2de38a" stroke="#2a6a48" stroke-width="0.8"/><path d="M-6.4 -3.2 h12.8 v7 h-12.8z" fill="#000"/><rect x="-4.5" y="-0.6" width="9" height="1.8" fill="#fff"/><rect x="-4.4" y="2" width="8.8" height="4.6" fill="#2de38a" stroke="#245e40" stroke-width="0.8"/></g>
<path d="M852.5999999999999 535.45 v10 M857.0 535.45 v10 M849.8 538.25 h10 M849.8 542.6500000000001 h10" stroke="#6e6e6e" stroke-width="1.7"/>
<rect x="867.8" y="533.5" width="21.5" height="13.899999999999977" fill="#007800"/>
<path d="M784 555.3499999999999 q5 -4.5 10 0 q-5 4.5 -10 0z" fill="#3aa070" stroke="#1d4a35" stroke-width="1"/><circle cx="789" cy="555.3499999999999" r="1.5" fill="#1d4a35"/>
<path d="M808.6 553.8499999999999 v-1.8 a2.5 2.5 0 0 1 5 0 v1.8" fill="none" stroke="#cacaca" stroke-width="1.3"/><rect x="806.9" y="553.55" width="8.4" height="6.3" rx="0.5" fill="#cacaca"/>
<g transform="translate(832.7 556.1499999999999) scale(0.82)"><rect x="-3.3" y="-8" width="6.6" height="6" fill="#2de38a" stroke="#2a6a48" stroke-width="0.8"/><path d="M-6.4 -3.2 h12.8 v7 h-12.8z" fill="#000"/><rect x="-4.5" y="-0.6" width="9" height="1.8" fill="#fff"/><rect x="-4.4" y="2" width="8.8" height="4.6" fill="#2de38a" stroke="#245e40" stroke-width="0.8"/></g>
<path d="M852.5999999999999 550.3499999999999 v10 M857.0 550.3499999999999 v10 M849.8 553.1499999999999 h10 M849.8 557.55 h10" stroke="#6e6e6e" stroke-width="1.7"/>
<rect x="867.8" y="548.4" width="21.5" height="13.899999999999977" fill="#000"/>
<path d="M990 632 l3 -3 l3 3z M990 637 l3 3 l3 -3z" fill="#555"/>
<path d="M986 663 h4 M986 665.5 h4 M986 668 h4" stroke="#aaa" stroke-width="0.7"/>
<path d="M41 690.8 h14 M48 683.8 v14" stroke="#9a9a9a" stroke-width="1.2" stroke-dasharray="1.5 1"/><circle cx="48" cy="690.8" r="1.5" fill="#999"/>
<circle cx="69.5" cy="685" r="1.5" fill="#3b8c63"/>
<circle cx="69.5" cy="689.3" r="1.5" fill="#3b8c63"/>
<circle cx="69.5" cy="693.5" r="1.5" fill="#3b8c63"/>
<circle cx="69.5" cy="697.6" r="1.5" fill="#3b8c63"/>
<circle cx="74.2" cy="685" r="1.5" fill="#3b8c63"/>
<circle cx="74.2" cy="689.3" r="1.5" fill="#3b8c63"/>
<circle cx="74.2" cy="693.5" r="1.5" fill="#3b8c63"/>
<circle cx="74.2" cy="697.6" r="1.5" fill="#3b8c63"/>
<circle cx="79" cy="685" r="1.5" fill="#3b8c63"/>
<circle cx="79" cy="689.3" r="1.5" fill="#3b8c63"/>
<circle cx="79" cy="693.5" r="1.5" fill="#3b8c63"/>
<circle cx="79" cy="697.6" r="1.5" fill="#3b8c63"/>
<path d="M96 686.5 q5 2 7.8 9.5" fill="none" stroke="#666" stroke-width="0.9"/>
<circle cx="97.2" cy="684.7" r="1.6" fill="#3b8c63" stroke="#3b8c63" stroke-width="0.8"/>
<circle cx="93.5" cy="688.3" r="1.6" fill="#3b8c63" stroke="#3b8c63" stroke-width="0.8"/>
<circle cx="106.6" cy="694" r="1.6" fill="#3b8c63" stroke="#3b8c63" stroke-width="0.8"/>
<circle cx="103.3" cy="697" r="1.6" fill="#3b8c63" stroke="#3b8c63" stroke-width="0.8"/>
<path d="M120 688 q5 2 8 9" fill="none" stroke="#666" stroke-width="0.9"/>
<circle cx="119" cy="686" r="1.6" fill="#3b8c63" stroke="#3b8c63" stroke-width="0.8"/>
<circle cx="122.5" cy="684" r="1.6" fill="#3b8c63" stroke="#3b8c63" stroke-width="0.8"/>
<circle cx="124.5" cy="688" r="1.6" fill="#3b8c63" stroke="#3b8c63" stroke-width="0.8"/>
<circle cx="127" cy="690.5" r="1.6" fill="#3b8c63" stroke="#3b8c63" stroke-width="0.8"/>
<circle cx="129" cy="693" r="1.6" fill="#3b8c63" stroke="#3b8c63" stroke-width="0.8"/>
<circle cx="131.8" cy="694.2" r="1.6" fill="#3b8c63" stroke="#3b8c63" stroke-width="0.8"/>
<circle cx="127.5" cy="698.5" r="1.6" fill="#3b8c63" stroke="#3b8c63" stroke-width="0.8"/>
<path d="M144.5 688 q5 1.5 7.5 9.5 M148.5 684 l8 8.5" fill="none" stroke="#666" stroke-width="0.9"/>
<circle cx="153.5" cy="688.8" r="1.6" fill="#3b8c63" stroke="#3b8c63" stroke-width="0.8"/>
<circle cx="145" cy="697" r="1.6" fill="#3b8c63" stroke="#3b8c63" stroke-width="0.8"/>
<path d="M171 688 q5 1.5 7.5 9.5 M174.5 684 l8 8.5" fill="none" stroke="#666" stroke-width="0.9"/>
<circle cx="176.8" cy="690.5" r="1.6" fill="#3b8c63" stroke="#3b8c63" stroke-width="0.8"/>
<circle cx="179.5" cy="688.5" r="1.6" fill="#3b8c63" stroke="#3b8c63" stroke-width="0.8"/>
<path d="M195.5 688.5 q5 1.5 7.5 9.5 M199.5 684 l8 8.5" fill="none" stroke="#666" stroke-width="0.9"/>
<circle cx="203.5" cy="687.8" r="1.6" fill="#3b8c63" stroke="#3b8c63" stroke-width="0.8"/>
<circle cx="204" cy="694.5" r="1.6" fill="#3b8c63" stroke="#3b8c63" stroke-width="0.8"/>
<path d="M205.9 687.8 L208.78 686.1999999999999 L208.78 689.4Z" fill="#3e8a66"/>
<path d="M202.1 693 L199.22 691.4 L199.22 694.6Z" fill="#3e8a66"/>
<path d="M223 686 l11.5 10.5 M234.5 686 l-11.5 10.5" stroke="#555" stroke-width="1"/><rect x="227.2" y="689.7" width="3" height="3" fill="#2e6e50" stroke="#2e6e50" stroke-width="0.5"/>
<rect x="253" y="690" width="14" height="2.6" fill="#b6eccd"/><path d="M253 691.3 h14" stroke="#3c7a5a" stroke-width="1"/><circle cx="260.4" cy="691.3" r="1.5" fill="#fff" stroke="#2a5a44" stroke-width="1"/>
<rect x="284.3" y="684" width="2.6" height="14" fill="#b6eccd"/><path d="M285.6 684 v14" stroke="#3c7a5a" stroke-width="1"/><circle cx="285.6" cy="691.3" r="1.5" fill="#fff" stroke="#2a5a44" stroke-width="1"/>
<rect x="310" y="684" width="2.6" height="14" fill="#b6eccd"/><rect x="304.2" y="690" width="14" height="2.6" fill="#b6eccd"/><path d="M311.3 684 v14 M304.2 691.3 h14" stroke="#3c7a5a" stroke-width="1"/><circle cx="311.3" cy="691.3" r="1.2" fill="#2a5a44"/>
<path d="M337.5 696.5 l4.5 -4.5 l3 3 l-4.5 4.5 z" fill="#fff" stroke="#555" stroke-width="0.9"/><path d="M342.0 692.0 l3.5 -3.5 l3 3 l-3.5 3.5z" fill="#3b7a5a" stroke="#2a5a44" stroke-width="0.8"/><path d="M342.5 688.5 l6 6" stroke="#777" stroke-width="0.7"/>
<path d="M357.8 686 v-1.5 a2.3 2.3 0 0 1 4.6 0 v1.5" fill="none" stroke="#000" stroke-width="1.2"/><rect x="356.6" y="685.5" width="7" height="5.5" fill="#000"/>
<path d="M363 700 l4.5 -4.5 l3 3 l-4.5 4.5 z" fill="#fff" stroke="#555" stroke-width="0.9"/><path d="M367.5 695.5 l3.5 -3.5 l3 3 l-3.5 3.5z" fill="#3b7a5a" stroke="#2a5a44" stroke-width="0.8"/><path d="M368 692 l6 6" stroke="#777" stroke-width="0.7"/>
<rect x="400.7" y="685" width="13" height="10" fill="#fff" stroke="#777" stroke-width="1"/>
<defs><linearGradient id="gl" x1="0" x2="1"><stop offset="0" stop-color="#2bd884"/><stop offset="0.6" stop-color="#fff"/></linearGradient></defs><rect x="401.2" y="685.5" width="12" height="9" fill="url(#gl)"/>
<rect x="400.7" y="685" width="13" height="10" fill="none" stroke="#666" stroke-width="1"/><rect x="405.2" y="695.5" width="4" height="1.8" fill="#111"/>
<rect x="426.3" y="685" width="13" height="10" fill="#fff" stroke="#777" stroke-width="1"/>
<defs><linearGradient id="gr" x1="1" x2="0"><stop offset="0" stop-color="#2bd884"/><stop offset="0.6" stop-color="#ddd"/></linearGradient></defs><rect x="426.8" y="685.5" width="12" height="9" fill="url(#gr)"/>
<rect x="426.3" y="685" width="13" height="10" fill="none" stroke="#666" stroke-width="1"/><rect x="430.8" y="695.5" width="4" height="1.8" fill="#111"/>
<rect x="451.9" y="685" width="13" height="10" fill="#fff" stroke="#777" stroke-width="1"/>
<defs><linearGradient id="gt" x1="0" x2="0" y1="0" y2="1"><stop offset="0" stop-color="#2bd884"/><stop offset="0.7" stop-color="#fff"/></linearGradient></defs><rect x="452.4" y="685.5" width="12" height="9" fill="url(#gt)"/>
<rect x="451.9" y="685" width="13" height="10" fill="none" stroke="#666" stroke-width="1"/><rect x="456.4" y="695.5" width="4" height="1.8" fill="#111"/>
<rect x="477.9" y="685" width="13" height="10" fill="#fff" stroke="#777" stroke-width="1"/>
<defs><linearGradient id="gb" x1="0" x2="0" y1="1" y2="0"><stop offset="0" stop-color="#2bd884"/><stop offset="0.7" stop-color="#fff"/></linearGradient></defs><rect x="478.4" y="685.5" width="12" height="9" fill="url(#gb)"/>
<rect x="477.9" y="685" width="13" height="10" fill="none" stroke="#666" stroke-width="1"/><rect x="482.4" y="695.5" width="4" height="1.8" fill="#111"/>
<rect x="503.5" y="685" width="13" height="10" fill="#fff" stroke="#777" stroke-width="1"/>
<rect x="506.5" y="687" width="6" height="4.5" fill="#2bd884"/>
<rect x="503.5" y="685" width="13" height="10" fill="none" stroke="#666" stroke-width="1"/><rect x="508" y="695.5" width="4" height="1.8" fill="#111"/>
<path d="M540.7 692 h6.6 M544 688.7 v6.6" stroke="#000" stroke-width="2.3"/>
<rect x="548.6" y="684.6" width="7" height="14" fill="#fafafa" stroke="#999" stroke-width="0.9"/><path d="M550 687 h4 M550 689.5 h4 M550 692 h4 M550 694.5 h4 M550 697 h4" stroke="#777" stroke-width="0.8"/>
<path d="M566.3000000000001 692 h6.6 M569.6 688.7 v6.6" stroke="#000" stroke-width="2.3"/>
<rect x="574.6" y="684.6" width="7" height="14" fill="#f4fbf7" stroke="#8cc9a8" stroke-width="0.9"/><path d="M574.6 691.6 h7" stroke="#8cc9a8" stroke-width="0.9"/><path d="M576.3 689.5 l3.5 -3.5" stroke="#444" stroke-width="0.8"/><circle cx="578.1" cy="695" r="1.8" fill="none" stroke="#444" stroke-width="0.8"/>
<path d="M396.5 716 q3.5 3.5 8 2.8 q4.5 -1 6 -8" fill="none" stroke="#111" stroke-width="1.6"/>
<path d="M414.8 750 V717 q0 -4 4 -4 h21.5 q4 0 4 4 V750" fill="#fff" stroke="#111" stroke-width="1.6"/><path d="M414.8 729 h29.5" stroke="#111" stroke-width="1.6"/><rect x="424.6" y="713.8" width="9.6" height="15" fill="#2bdf88" stroke="#111" stroke-width="1.4"/><path d="M429.4 709.5 v4" stroke="#111" stroke-width="1.4"/>
</svg></body></html>
